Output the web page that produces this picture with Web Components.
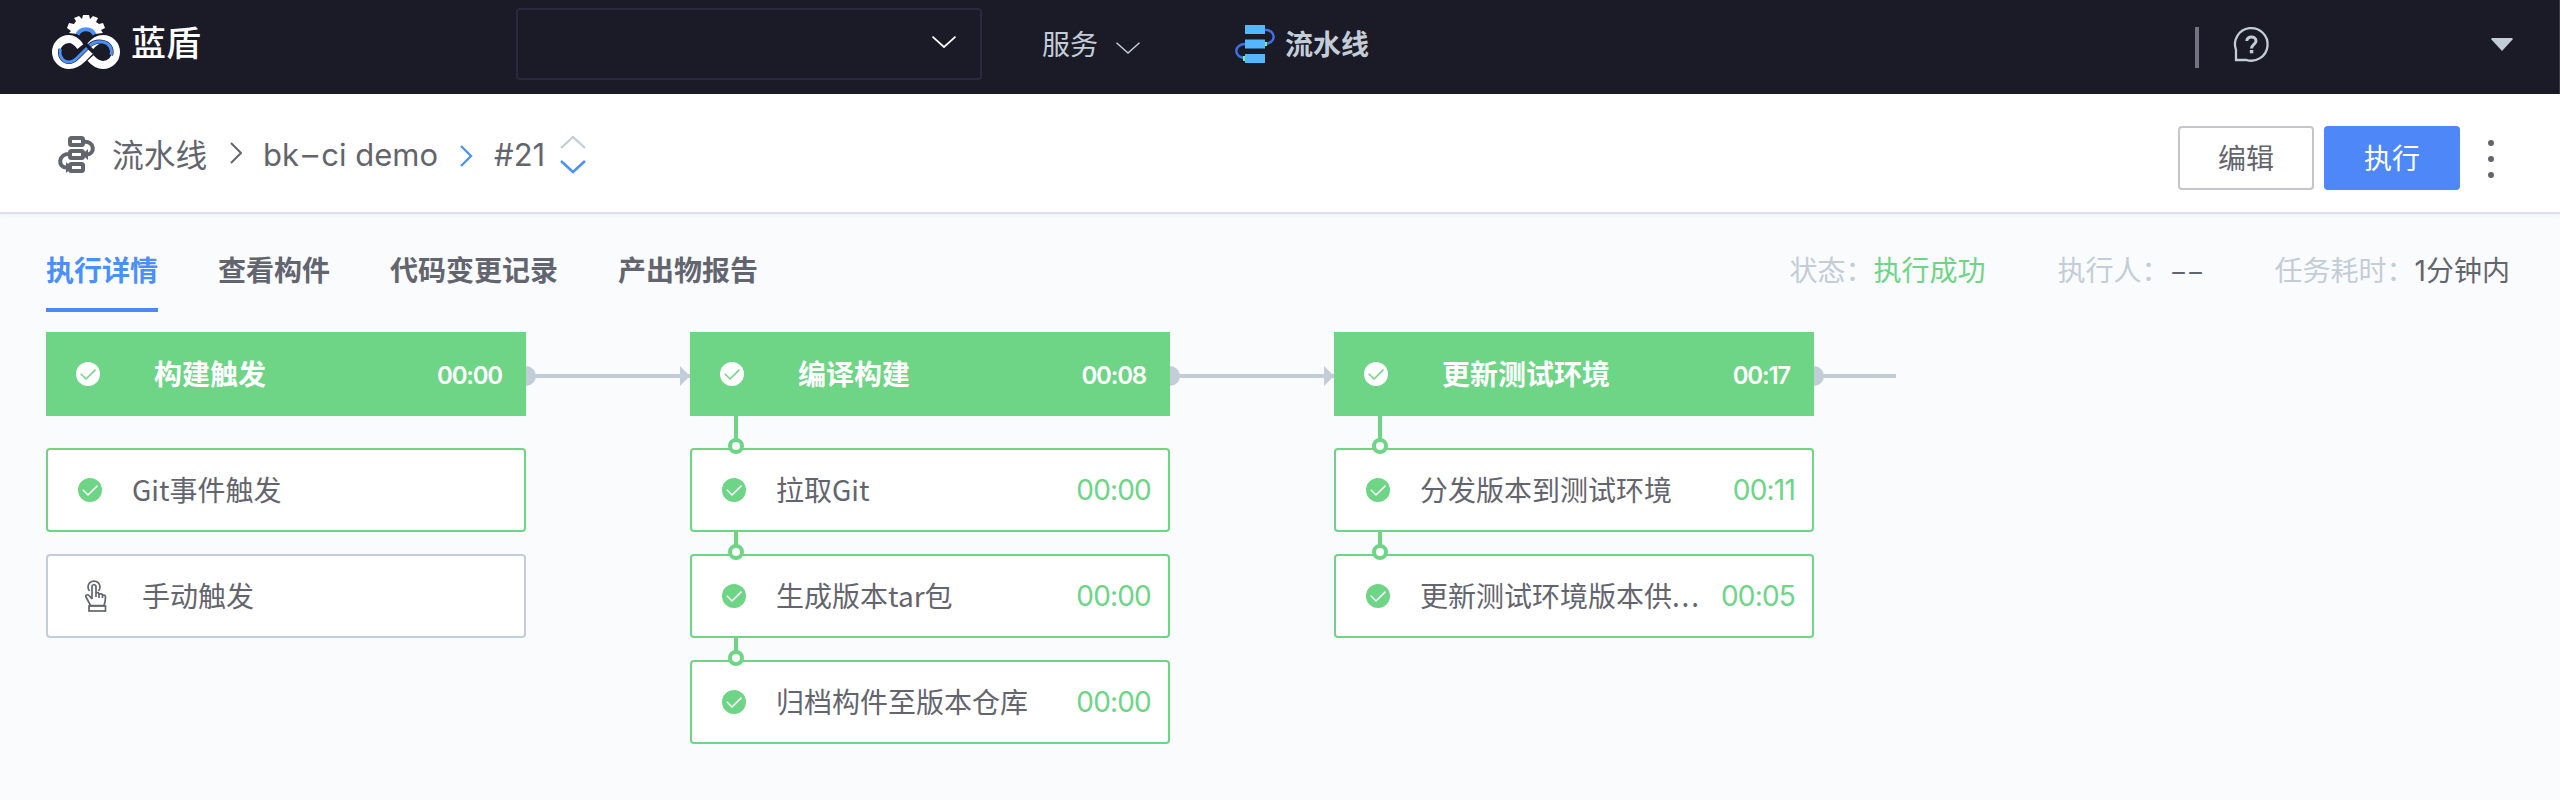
<!DOCTYPE html>
<html lang="zh-CN">
<head>
<meta charset="utf-8">
<title>蓝盾 流水线</title>
<style>
html,body{margin:0;height:100%}
body{background:#fafbfd;font-family:"Noto Sans CJK SC",sans-serif;color:#63656e;font-size:28px;overflow:hidden}
</style>
</head>
<body>
<ci-app></ci-app>
<script>
const define = (name, render) => customElements.define(name, class extends HTMLElement {
  connectedCallback() {
    if (this.shadowRoot) return;
    this.attachShadow({mode: 'open'}).innerHTML =
      '<style>*{box-sizing:border-box}svg{display:block;flex:none;overflow:visible}</style>' + render(this);
  }
});

define('ci-check', el => `
<style>:host{display:block;flex:none;width:24px;height:24px}</style>
<svg width="24" height="24" viewBox="0 0 24 24"><circle cx="12" cy="12" r="12" fill="${el.hasAttribute('inverse') ? '#fff' : '#6dd585'}"/>
<path d="M4.800 11.800 10 17 19.500 7.600" fill="none" stroke="${el.hasAttribute('inverse') ? '#6dd585' : '#fff'}" stroke-width="1.500"/></svg>`);

define('ci-header', () => `
<style>
:host{display:flex;align-items:center;height:94px;background:#1b1a27;color:#c3cdd7;border-right:1px solid #3a3a48;padding-left:52px}
.logo{margin-bottom:10px}
.name{margin:-13px 0 0 11px;width:71px;font-size:35px;line-height:50px;font-weight:500;color:#fff}
.select{margin:-6px 0 0 314px;width:466px;height:72px;border:2px solid #2a293f;border-radius:4px;display:flex;align-items:center;justify-content:flex-end;padding:0 24px 4px 0}
.service{margin:-8px 0 0 60px;width:74px;line-height:40px}
.active{margin:-8px 0 0 10px;font-weight:700;line-height:40px;flex:1}
.bar{width:4px;height:41px;background:#737281;margin-right:35px}
</style>
<svg class="logo" width="68" height="54" viewBox="0 0 68 54">
 <path d="M17 18 19 16 15 13 17 8 22 9 24 6 22 3 27 1 30 4 31 0H37L38 4 41 1 46 3 44 7 47 9 51 8 53 13 49 15 51 18 43 19A10 10 0 0 0 25 19Z" fill="#fff"/>
 <path d="M25.500 19.500A9.500 9.500 0 0 1 42.500 19.500" fill="none" stroke="#4b91fa" stroke-width="4"/>
 <g fill="none" stroke="#fff" stroke-width="8">
 <path d="M28.500 31.500C25 27 21 24 17 24A13 13 0 0 0 17 50C23 50 27 47 30.500 43.500L38 36"/>
 <path d="M38 31.500C43 26 46 24 51 24A13 13 0 0 1 51 50C46 50 42 47 38.500 43"/></g>
 <path d="M8.500 34C6.500 41 11 47 17 47 20 47 22.500 45.500 25.500 42.500L36.500 31.500C41 27 45 26 51 27 57 28 61 34 59 40" fill="none" stroke="#1b1a27" stroke-width="4.200"/>
 <path d="M8.500 34C6.500 41 11 47 17 47 20 47 22.500 45.500 25.500 42.500L36.500 31.500C41 27 45 26 51 27 57 28 61 34 59 40" fill="none" stroke="#4b91fa" stroke-width="3"/>
 <path d="M31.500 27 41.500 37" stroke="#1b1a27" stroke-width="3.500"/>
</svg>
<div class="name">蓝盾</div>
<div class="select"><svg width="24" height="12"><path d="M.5.7 12 11 23.500.7" fill="none" stroke="#fff" stroke-width="1.700"/></svg></div>
<div class="service">服务</div>
<svg width="24" height="12" style="margin-top:2px"><path d="M.5.7 12 11 23.500.7" fill="none" stroke="#c3cdd7" stroke-width="1.500"/></svg>
<svg width="40" height="38" viewBox="0 0 40 38" style="margin:-6px 0 0 95px"><g fill="none" stroke="#416fe0" stroke-width="2.500"><path d="M30 4.700A8.700 7.100 0 0 1 30 18.900M10 18.900A8.700 7.100 0 0 0 10 33.100"/></g><path d="M8 31h3v5h-3zM29 17h3v4h-3z" fill="#70f59a"/><path d="M10 0H30V9H10zM10 14.500H30V23.500H10zM10 29H30V38H10z" fill="#53b6ff"/></svg>
<div class="active">流水线</div>
<div class="bar"></div>
<svg width="35" height="35" viewBox="0 0 35 35" style="margin-top:-5px"><path d="M2 33V23A16.300 16.300 0 1 1 12 32.800Z" fill="none" stroke="#c3cdd7" stroke-width="2.300"/><path d="M12.800 14C12.800 8.700 22 8.800 22 14 22 17.200 17.500 17.500 17.500 21.500" fill="none" stroke="#c3cdd7" stroke-width="3"/><rect x="15.800" y="23" width="3.500" height="3.300" fill="#c3cdd7"/></svg>
<svg width="22" height="13" style="margin:-5px 46px 0 222px"><path d="M1 0H21L22 1 11 13 0 1Z" fill="#c3cdd7"/></svg>`);

define('ci-toolbar', () => `
<style>
:host{display:flex;align-items:center;height:120px;background:#fff;border-bottom:2px solid #dde1e9;box-shadow:0 2px 5px #0000000a;padding:0 65px 0 58px;font-size:31.700px;line-height:46px;position:relative}
.t{white-space:nowrap}
.l{font-family:Inter;font-size:31px;letter-spacing:0}
.d{display:inline-block;transform:scaleX(1.600);margin:0 4px}
.grow{flex:1}
button{width:136px;height:64px;border-radius:4px;font:28px "Noto Sans CJK SC",sans-serif;line-height:1;padding:0 0 2px;border:2px solid #c4c6cc;background:#fff;color:#63656e;margin:10px 10px 0 0}
button.p{background:#4d87f8;border-color:#4d87f8;color:#fff;margin-right:28px}
</style>
<svg width="37" height="37" viewBox="0 0 37 37" style="margin-top:2px"><g fill="none" stroke="#63656e" stroke-width="4"><rect x="12" y="2" width="13" height="7" rx="1.500"/><rect x="12" y="15" width="13" height="7" rx="1.500"/><rect x="12" y="28" width="13" height="7" rx="1.500"/><path d="M25 6C37 4 38 19 28 18.500M12 18C0 17 -1 32 9 31.500"/></g><path d="M30 13V24L24 18.500ZM8 26V37L14 31.500Z" fill="#63656e"/></svg>
<div class="t" style="margin-left:17px;width:118px">流水线</div>
<svg width="12" height="22"><path d="M1 1 11 11 1 21" fill="none" stroke="#63656e" stroke-width="2"/></svg>
<div class="t l" style="margin-left:21px;width:197px;padding-top:4px">bk<span class="d">-</span>ci demo</div>
<svg width="12" height="22" style="margin-top:5px"><path d="M1 1 11 11 1 21" fill="none" stroke="#4b91fa" stroke-width="2.300"/></svg>
<div class="t l" style="margin-left:22px;width:66px;padding-top:4px">#21</div>
<svg width="26" height="38" viewBox="0 0 26 38" style="margin-top:3px"><path d="M1 12 13 1 25 12" fill="none" stroke="#c3cdd7" stroke-width="2.300"/><path d="M1 25 13 36 25 25" fill="none" stroke="#4b91fa" stroke-width="2.500"/></svg>
<div class="grow"></div>
<button>编辑</button><button class="p">执行</button>
<svg width="7" height="38" viewBox="0 0 7 38" style="margin-top:11px"><g fill="#63656e"><circle cx="3" cy="3" r="3"/><circle cx="3" cy="19" r="3"/><circle cx="3" cy="35" r="3"/></g></svg>`);

define('ci-tabs', () => `
<style>
:host{display:flex;height:98px;padding:0 50px 0 46px;line-height:40px;white-space:nowrap}
nav{display:flex;gap:60px;flex:1;font-weight:700}
nav div{padding-top:35px}
.on{color:#4b8ffa;border-bottom:4px solid #4d87f8}
.i{padding-top:35px;margin-left:72px;display:flex;color:#c3cdd7}
.i b{font-weight:400;color:#63656e}.i b.ok{color:#6dd585}
.d{display:inline-block;width:33px;transform:scaleX(1.750);transform-origin:0 50%}
.n{font-family:Inter}
</style>
<nav><div class="on">执行详情</div><div>查看构件</div><div>代码变更记录</div><div>产出物报告</div></nav>
<div class="i">状态：<b class="ok">执行成功</b></div><div class="i">执行人：<b class="d">--</b></div><div class="i">任务耗时：<b><span class="n">1</span>分钟内</b></div>`);

define('ci-stage', el => `
<style>
:host{display:block;width:480px;flex:none;position:relative}
header{display:flex;align-items:center;height:84px;background:#6dd585;color:#fff;font-weight:700;padding:0 24px 0 30px;margin-bottom:32px}
header span{margin-left:54px;flex:1;line-height:40px;padding-bottom:3px}
header ci-check{margin-bottom:1px}
time{font:600 24px Inter;letter-spacing:-1.200px;padding-top:2px}
.jobs{display:flex;flex-direction:column;gap:22px}
.dot,.arrow,.line{position:absolute;z-index:-1}
.line{left:480px;top:42px;width:${el.hasAttribute('last') ? 82 : 164}px;height:4px;background:#c3cdd7}
.dot{left:470px;top:34px;width:20px;height:20px;border-radius:50%;background:#c3cdd7}
.arrow{left:634px;top:34px;border:10px solid transparent;border-left-color:#c3cdd7;border-right:0}
</style>
<header><ci-check inverse></ci-check><span>${el.getAttribute('name')}</span><time>${el.getAttribute('time')}</time></header>
<div class="jobs"><slot></slot></div>
<i class="line"></i><i class="dot"></i>${el.hasAttribute('last') ? '' : '<i class="arrow"></i>'}`);

define('ci-job', el => `
<style>
:host{display:flex;align-items:center;height:84px;border:2px solid ${el.hasAttribute('manual') ? '#c3cdd7' : '#6dd585'};border-radius:4px;background:#fff;padding:0 17px 0 30px;position:relative;box-sizing:border-box}
.name{margin-left:30px;flex:1;line-height:40px;white-space:nowrap;padding-bottom:3px}
time{font:28px Inter;letter-spacing:-.8px;color:#6dd585}
.link{position:absolute;left:42px;bottom:100%;width:4px;height:${el.hasAttribute('first') ? 34 : 24}px;background:#6dd585}
.ring{position:absolute;left:36px;top:-12px;width:16px;height:16px;border:4px solid #6dd585;border-radius:50%;background:#fff}
::slotted(span){letter-spacing:1.800px}
</style>
${el.hasAttribute('linked') ? '<i class="link"></i><i class="ring"></i>' : ''}
${el.hasAttribute('manual') ? `<svg width="22" height="32" viewBox="0 0 22 32" style="margin:0 5px 0 7px"><g fill="none" stroke="#63656e" stroke-width="1.700"><path d="M4.500 11A6 6 0 1 1 13.500 11"/><path d="M7 19V7C7 4 11 4 11 7V13C13 12 14 13 14 14.500 16 13 17.500 14 17.500 15.500 19 14.500 20.500 15.500 20.500 17 20.500 20 20 23 19 25.500H5.500L1 17C0 15 2.500 14 4 15.500L7 19M11 13V17M14 14V18M17.500 15V18"/><rect x="4" y="26" width="16.500" height="5"/></g></svg>` : '<ci-check></ci-check>'}
<div class="name"><slot></slot></div>${el.hasAttribute('time') ? `<time>${el.getAttribute('time')}</time>` : ''}`);

define('ci-app', () => `
<style>:host{display:block;width:2560px;height:800px}
main{display:flex;gap:164px;padding:20px 46px;position:relative;z-index:0}</style>
<ci-header></ci-header><ci-toolbar></ci-toolbar><ci-tabs></ci-tabs>
<main>
<ci-stage name="构建触发" time="00:00"><ci-job>Git事件触发</ci-job><ci-job manual>手动触发</ci-job></ci-stage>
<ci-stage name="编译构建" time="00:08"><ci-job linked first time="00:00">拉取Git</ci-job><ci-job linked time="00:00">生成版本tar包</ci-job><ci-job linked time="00:00">归档构件至版本仓库</ci-job></ci-stage>
<ci-stage name="更新测试环境" time="00:17" last><ci-job linked first time="00:11">分发版本到测试环境</ci-job><ci-job linked time="00:05">更新测试环境版本供<span>...</span></ci-job></ci-stage>
</main>`);
</script>
</body>
</html>
